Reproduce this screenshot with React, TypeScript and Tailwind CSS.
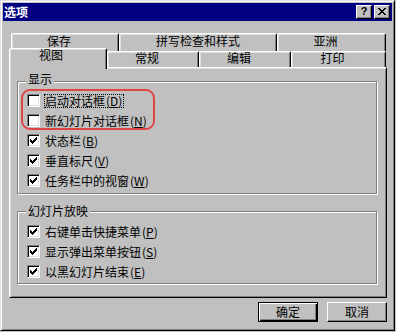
import React from "react";

const Check = () => (
  <svg width="7" height="7" viewBox="0 0 7 7" shapeRendering="crispEdges">
    <path
      fill="#000"
      d="M6 0h1v1h-1zM5 1h2v1h-2zM0 2h1v1h-1zM4 2h3v1h-3zM0 3h2v1h-2zM3 3h3v1h-3zM0 4h5v1h-5zM1 5h3v1h-3zM2 6h1v1h-1z"
    />
  </svg>
);

const CloseGlyph = () => (
  <svg width="8" height="7" viewBox="0 0 8 7" shapeRendering="crispEdges">
    <path
      fill="#000"
      d="M0 0h2v1h-2zM6 0h2v1h-2zM1 1h2v1h-2zM5 1h2v1h-2zM2 2h4v1h-4zM3 3h2v1h-2zM2 4h4v1h-4zM1 5h2v1h-2zM5 5h2v1h-2zM0 6h2v1h-2zM6 6h2v1h-2z"
    />
  </svg>
);

function CheckRow({
  label,
  mn,
  checked,
  focus,
}: {
  label: string;
  mn: string;
  checked: boolean;
  focus?: boolean;
}) {
  return (
    <div className="flex items-center h-[13px]">
      <div className="w-[13px] h-[13px] shrink-0 bg-white border border-t-[#808080] border-l-[#808080] border-r-white border-b-white shadow-[inset_1px_1px_0_#000,inset_-1px_-1px_0_#dfdfdf] pl-[2px] pt-[2px]">
        {checked && <Check />}
      </div>
      <span
        className={
          focus
            ? "ml-[4px] h-[14px] pr-[1px] border border-dotted border-black leading-[12px] whitespace-nowrap"
            : "ml-[4px] h-[14px] pr-[1px] border border-transparent leading-[12px] whitespace-nowrap"
        }
      >
        {label}
        <span className="ml-[1px]">
          (<span className="underline underline-offset-[1px]">{mn}</span>)
        </span>
      </span>
    </div>
  );
}

const tabBase =
  "bg-[#c0c0c0] border-t border-l border-r border-t-white border-l-white border-r-black rounded-tl-[2px] rounded-tr-[2px] shadow-[inset_1px_1px_0_#dfdfdf,inset_-1px_0_0_#808080] flex justify-center";

export default function App() {
  return (
    <div className="w-[396px] h-[332px] bg-[#c0c0c0] font-['Noto_Sans_CJK_SC',sans-serif] text-[12px] leading-[12px] text-black">
      <div className="w-[395px] h-[331px] border border-t-[#dfdfdf] border-l-[#dfdfdf] border-r-black border-b-black shadow-[inset_1px_1px_0_#fff,inset_-1px_-1px_0_#808080] p-[2px] flex flex-col">
        {/* Title bar */}
        <div className="h-[18px] shrink-0 bg-[#000080] flex items-center pl-[1px] pr-[2px]">
          <span className="text-white font-bold leading-[12px]">选项</span>
          <div className="ml-auto flex gap-[2px]">
            <div className="w-[16px] h-[14px] bg-[#c0c0c0] border border-t-white border-l-white border-r-black border-b-black shadow-[inset_-1px_-1px_0_#808080] flex items-center justify-center">
              <span className="font-['Liberation_Sans',sans-serif] font-bold text-[11px] leading-[11px] pb-[1px]">
                ?
              </span>
            </div>
            <div className="w-[16px] h-[14px] bg-[#c0c0c0] border border-t-white border-l-white border-r-black border-b-black shadow-[inset_-1px_-1px_0_#808080] flex items-center justify-center pb-[1px]">
              <CloseGlyph />
            </div>
          </div>
        </div>

        {/* Body */}
        <div className="pl-[6px] pt-[12px] flex flex-col">
          {/* Back tab row */}
          <div className="flex ml-[2px] h-[18px]">
            <div className={`${tabBase} w-[108px] h-[18px] pt-[1px] pr-[12px]`}>保存</div>
            <div className={`${tabBase} w-[158px] h-[18px] pt-[1px]`}>拼写检查和样式</div>
            <div className={`${tabBase} w-[109px] h-[18px] pt-[1px] pr-[12px]`}>亚洲</div>
          </div>
          {/* Front tab row */}
          <div className="flex items-start h-[19px] -mt-[3px]">
            <div className={`${tabBase} relative z-10 w-[98px] h-[21px] pr-[14px]`}>视图</div>
            <div className={`${tabBase} mt-[3px] w-[92px] h-[16px] pr-[12px]`}>常规</div>
            <div className={`${tabBase} mt-[3px] w-[92px] h-[16px] pr-[12px]`}>编辑</div>
            <div className={`${tabBase} mt-[3px] w-[95px] h-[16px] pr-[12px]`}>打印</div>
          </div>

          {/* Panel */}
          <div className="w-[378px] h-[231px] border border-t-white border-l-white border-r-black border-b-black shadow-[inset_1px_1px_0_#dfdfdf,inset_-1px_-1px_0_#808080] flex flex-col">
            {/* Group 1 */}
            <div className="relative ml-[7px] mt-[13px] w-[360px] h-[113px] border border-[#808080] shadow-[1px_1px_0_#fff,inset_1px_1px_0_#fff]">
              <span className="absolute left-[8px] top-[-9px] px-[2px] bg-[#c0c0c0] leading-[12px]">显示</span>
              <div className="flex flex-col gap-[7px] pl-[9px] pt-[12px]">
                <CheckRow label="启动对话框" mn="D" checked={false} focus />
                <CheckRow label="新幻灯片对话框" mn="N" checked={false} />
                <CheckRow label="状态栏" mn="B" checked />
                <CheckRow label="垂直标尺" mn="V" checked />
                <CheckRow label="任务栏中的视窗" mn="W" checked />
              </div>
              <div className="absolute left-[3px] top-[7px] w-[134px] h-[41px] border-2 border-[#e04444] rounded-[9px]" />
            </div>

            {/* Group 2 */}
            <div className="relative ml-[7px] mt-[17px] w-[360px] h-[73px] border border-[#808080] shadow-[1px_1px_0_#fff,inset_1px_1px_0_#fff]">
              <span className="absolute left-[8px] top-[-7px] px-[2px] bg-[#c0c0c0] leading-[12px]">幻灯片放映</span>
              <div className="flex flex-col gap-[7px] pl-[9px] pt-[13px]">
                <CheckRow label="右键单击快捷菜单" mn="P" checked />
                <CheckRow label="显示弹出菜单按钮" mn="S" checked />
                <CheckRow label="以黑幻灯片结束" mn="E" checked />
              </div>
            </div>
          </div>

          {/* Buttons */}
          <div className="w-[378px] flex justify-end gap-[9px] mt-[4px]">
            <div className="w-[60px] h-[20px] border border-black shadow-[inset_1px_1px_0_#fff,inset_-1px_-1px_0_#000,inset_-2px_-2px_0_#808080] flex items-center justify-center">
              确定
            </div>
            <div className="w-[60px] h-[20px] border border-t-white border-l-white border-r-black border-b-black shadow-[inset_-1px_-1px_0_#808080] flex items-center justify-center">
              取消
            </div>
          </div>
        </div>
      </div>
    </div>
  );
}
